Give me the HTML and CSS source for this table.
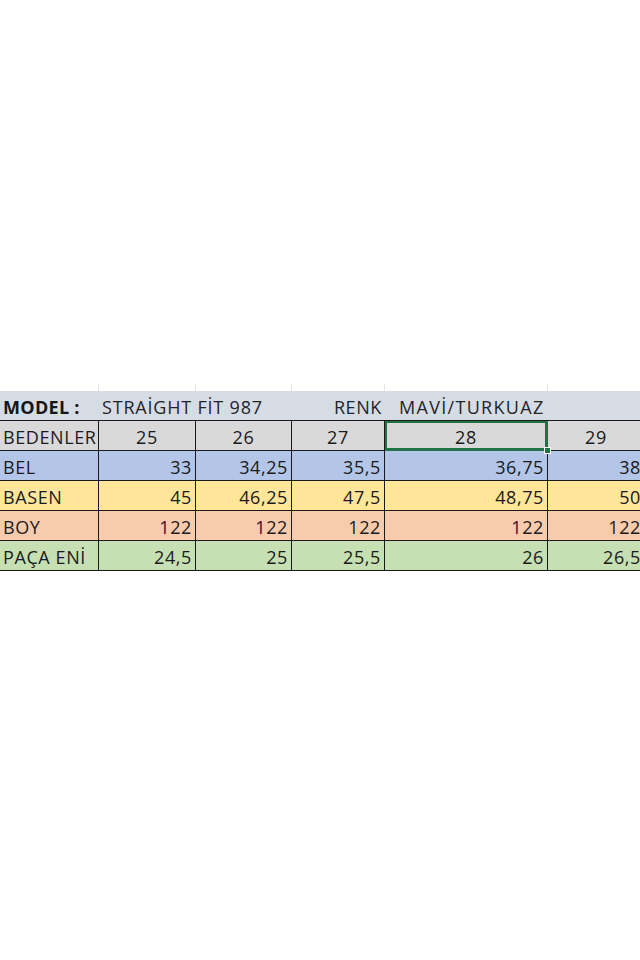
FILE: index.html
```html
<!DOCTYPE html>
<html lang="tr">
<head>
<meta charset="utf-8">
<title>Beden Tablosu</title>
<link rel="stylesheet" href="styles.css">
</head>
<body>
<div class="page">
  <div class="sheet">
    <div class="gridlines">
      <span></span><span></span><span></span><span></span><span></span><span></span>
    </div>
    <div class="table">
      <div class="c h1 bold">MODEL :</div>
      <div class="c h1 over">STRAİGHT FİT 987</div>
      <div class="c h1"></div>
      <div class="c h1 right">RENK</div>
      <div class="c h1 indent">MAVİ/TURKUAZ</div>
      <div class="c h1"></div>

      <div class="c h2 left">BEDENLER</div>
      <div class="c h2 center">25</div>
      <div class="c h2 center">26</div>
      <div class="c h2 center">27</div>
      <div class="c h2 center sel">28<span class="handle"></span></div>
      <div class="c h2 center">29</div>

      <div class="c bel left">BEL</div>
      <div class="c bel">33</div>
      <div class="c bel">34,25</div>
      <div class="c bel">35,5</div>
      <div class="c bel">36,75</div>
      <div class="c bel">38</div>

      <div class="c basen left">BASEN</div>
      <div class="c basen">45</div>
      <div class="c basen">46,25</div>
      <div class="c basen">47,5</div>
      <div class="c basen">48,75</div>
      <div class="c basen">50</div>

      <div class="c boy left">BOY</div>
      <div class="c boy">122</div>
      <div class="c boy">122</div>
      <div class="c boy">122</div>
      <div class="c boy">122</div>
      <div class="c boy">122</div>

      <div class="c paca left">PAÇA ENİ</div>
      <div class="c paca">24,5</div>
      <div class="c paca">25</div>
      <div class="c paca">25,5</div>
      <div class="c paca">26</div>
      <div class="c paca">26,5</div>
    </div>
  </div>
</div>
</body>
</html>
```

FILE: styles.css
```css
html, body {
  margin: 0;
  padding: 0;
  background: #ffffff;
}

.page {
  width: 640px;
  height: 960px;
  overflow: hidden;
  padding-top: 384px;
  box-sizing: border-box;
}

.sheet {
  width: 640px;
  overflow: hidden;
}

.gridlines {
  display: grid;
  grid-template-columns: 99px 97px 96px 93px 163px 97px;
  height: 7px;
  width: 645px;
}

.gridlines span {
  border-right: 1px solid #e4e4e4;
}

.table {
  display: grid;
  grid-template-columns: 99px 97px 96px 93px 163px 97px;
  grid-auto-rows: 30px;
  width: 645px;
  font-family: "Open Sans", "Noto Sans", sans-serif;
  font-size: 18px;
  letter-spacing: 0.6px;
  color: #1a1a20;
}

.c {
  box-sizing: border-box;
  display: flex;
  align-items: center;
  justify-content: flex-end;
  padding: 2px 3px 0 3px;
  border-right: 1px solid #1a1a1a;
  border-bottom: 1px solid #1a1a1a;
  white-space: nowrap;
  position: relative;
}

.h1 {
  background: #d6dce4;
  border-right: none;
  justify-content: flex-start;
  color: #24242a;
}

.h1.bold {
  font-weight: 700;
  letter-spacing: 0.3px;
  color: #15151a;
}

.h1.over {
  overflow: visible;
  z-index: 1;
  letter-spacing: 0.8px;
}

.h1.right {
  justify-content: flex-end;
  padding-right: 3px;
}

.h1.indent {
  padding-left: 14px;
  letter-spacing: 1.3px;
}

.left {
  justify-content: flex-start;
}

.center {
  justify-content: center;
}

.h2 {
  background: #d9d9d9;
}

.bel {
  background: #b4c6e7;
}

.basen {
  background: #ffe699;
}

.boy {
  background: #f8cbad;
}

.paca {
  background: #c6e0b4;
}

.sel {
  box-shadow: inset 0 0 0 2px #217346;
  border-right-color: #217346;
  border-bottom-color: #217346;
}

.handle {
  position: absolute;
  right: -4px;
  bottom: -4px;
  width: 7px;
  height: 7px;
  background: #217346;
  border: 1px solid #ffffff;
  box-sizing: border-box;
  z-index: 2;
}
```
